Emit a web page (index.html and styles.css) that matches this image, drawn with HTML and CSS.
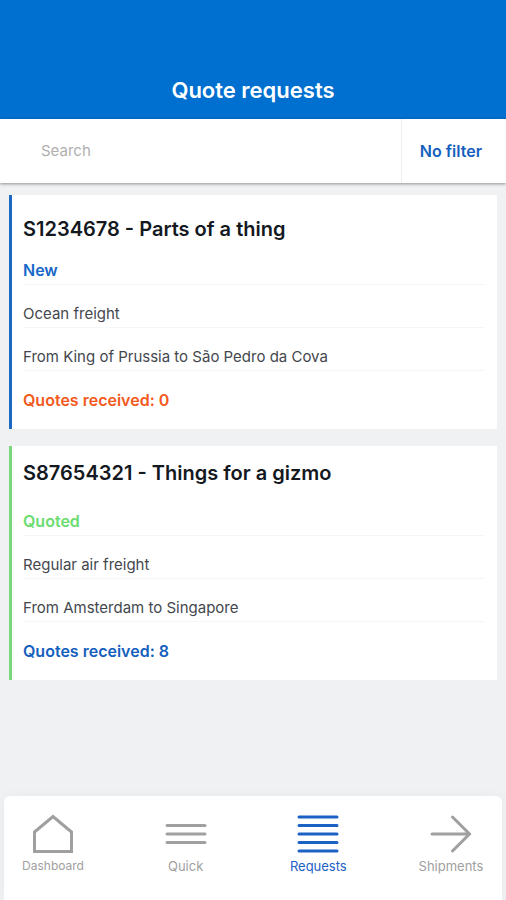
FILE: index.html
```html
<!DOCTYPE html>
<html lang="en">
<head>
<meta charset="utf-8">
<meta name="viewport" content="width=device-width, initial-scale=1">
<title>Quote requests</title>
<link rel="stylesheet" href="styles.css">
</head>
<body>
<header class="header"><h1>Quote requests</h1></header>
<div class="toolbar">
  <input class="search" type="search" placeholder="Search" aria-label="Search">
  <button class="filter" type="button">No filter</button>
</div>
<main class="list">
  <article class="card card-new">
    <h2>S1234678 - Parts of a thing</h2>
    <p class="row status">New</p>
    <p class="row">Ocean freight</p>
    <p class="row">From King of Prussia to São Pedro da Cova</p>
    <p class="row quotes">Quotes received: 0</p>
  </article>
  <article class="card card-quoted">
    <h2>S87654321 - Things for a gizmo</h2>
    <p class="row status">Quoted</p>
    <p class="row">Regular air freight</p>
    <p class="row">From Amsterdam to Singapore</p>
    <p class="row quotes">Quotes received: 8</p>
  </article>
</main>
<nav class="tabs">
  <a class="tab home" href="#dashboard">
    <svg viewBox="0 0 42 40" aria-hidden="true"><path d="M2.5 37.5V18L21 2.500 39.500 18v19.500z"/></svg>
    Dashboard
  </a>
  <a class="tab" href="#quick">
    <svg viewBox="0 0 42 40" aria-hidden="true"><path d="M2 11.500h38M2 20h38M2 28.500h38"/></svg>
    Quick
  </a>
  <a class="tab active" href="#requests" aria-current="page">
    <svg viewBox="0 0 42 40" aria-hidden="true"><path d="M2 3h38M2 11.500h38M2 20h38M2 28.500h38M2 37h38"/></svg>
    Requests
  </a>
  <a class="tab" href="#shipments">
    <svg viewBox="0 0 42 40" aria-hidden="true"><path d="M2 20h37M22.500 3 39.500 20l-17 17"/></svg>
    Shipments
  </a>
</nav>
</body>
</html>
```
FILE: styles.css
```css
* {
  box-sizing: border-box;
}

body {
  margin: 0;
  min-height: 100vh;
  display: flex;
  flex-direction: column;
  background: #eff1f3;
  color: #14191f;
  font-family: Inter, "Liberation Sans", sans-serif;
  font-size: 15px;
  line-height: 20px;
}

h1, h2, p {
  margin: 0;
}

.header {
  padding: 75px 16px 14px;
  background: #0070d0;
  color: #fff;
  text-align: center;
}

.header h1 {
  font-size: 22px;
  line-height: 30px;
  font-weight: 600;
}

.toolbar {
  display: flex;
  height: 64px;
  background: #fff;
  box-shadow: 0 1px 3px rgba(0, 0, 0, 0.4);
}

.search {
  flex: 1;
  min-width: 0;
  padding: 0 16px 0 41px;
  border: 0;
  background: transparent;
  font: inherit;
  appearance: none;
}

.search::placeholder {
  color: #b0b0b0;
  opacity: 1;
}

.filter {
  padding: 0 24px 0 18px;
  border: 0;
  border-left: 1px solid #eeeff0;
  background: transparent;
  color: #1560bd;
  font: inherit;
  font-size: 16px;
  font-weight: 600;
}

.list {
  flex: 1;
  display: flex;
  flex-direction: column;
  gap: 17px;
  padding: 12px 9px 24px;
}

.card {
  padding: 21px 12px 19px 11px;
  border-left: 3px solid;
  background: #fff;
}

.card h2 {
  color: #14191f;
  font-size: 20px;
  line-height: 26px;
  font-weight: 600;
}

.row {
  padding: 19px 0 3px;
  border-bottom: 1px solid #f5f6f6;
  color: #44484e;
}

.row.status,
.row.quotes {
  font-size: 16px;
  font-weight: 600;
}

.row.status {
  padding-top: 18px;
  padding-bottom: 4px;
}

.row.quotes {
  padding-bottom: 0;
  border-bottom: 0;
}

.card-new {
  border-color: #1b69c0;
}

.card-new .status {
  color: #1968c8;
}

.card-new .quotes {
  color: #f25a1d;
}

.card-quoted {
  padding-top: 14px;
  border-color: #79d67b;
}

.card-quoted .status {
  padding-top: 25px;
  color: #6bdc70;
}

.card-quoted .quotes {
  color: #1560bd;
}

.tabs {
  display: flex;
  justify-content: space-between;
  margin: 0 4px;
  padding: 18px 16px 22px 14px;
  border-radius: 6px 6px 0 0;
  background: #fff;
  box-shadow: 0 0 12px rgba(0, 0, 0, 0.04);
}

.tab {
  display: flex;
  flex-direction: column;
  align-items: center;
  width: 70px;
  color: #a0a0a0;
  font-size: 13px;
  line-height: 24px;
  text-decoration: none;
}

.tab.home {
  font-size: 12px;
}

.tab svg {
  width: 42px;
  height: 40px;
  fill: none;
  stroke: currentColor;
  stroke-width: 3;
  stroke-linecap: round;
}

.tab.active {
  color: #1b62c4;
}
```
